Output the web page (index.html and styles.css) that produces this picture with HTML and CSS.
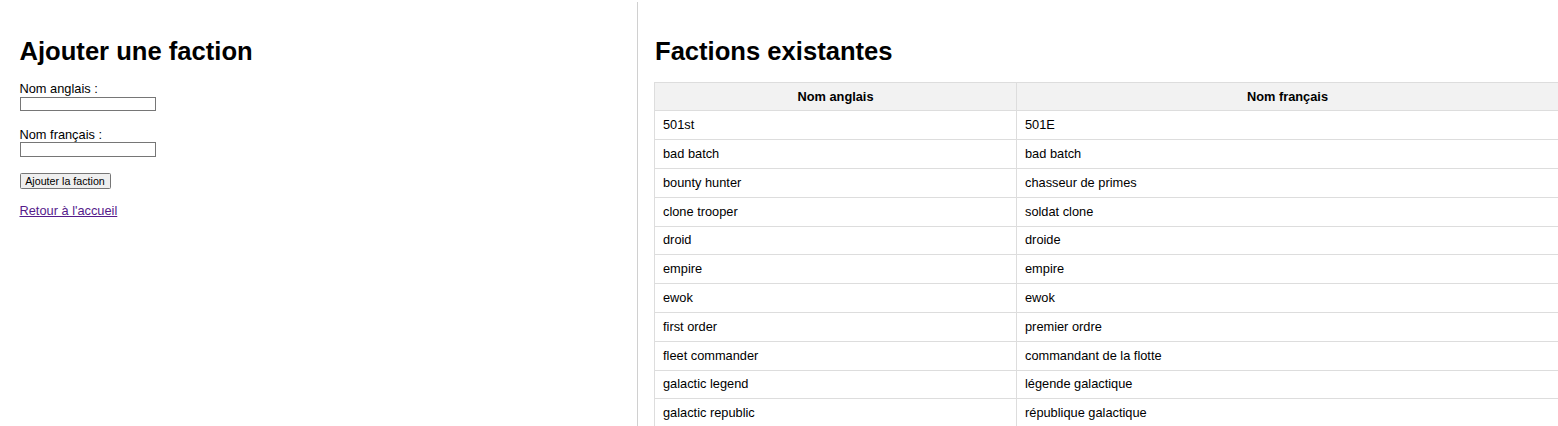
FILE: index.html
```html
<!DOCTYPE html>
<html lang="fr">
<head>
<meta charset="utf-8">
<title>Factions</title>
<link rel="stylesheet" href="styles.css">
</head>
<body>
<div class="layout">
  <section class="left">
    <h2 class="title">Ajouter une faction</h2>
    <form class="form">
      <div class="field">
        <label class="label" for="en">Nom anglais :</label>
        <input class="input" id="en" type="text">
      </div>
      <div class="field">
        <label class="label" for="fr">Nom français :</label>
        <input class="input" id="fr" type="text">
      </div>
      <button class="btn" type="button">Ajouter la faction</button>
    </form>
    <a class="back" href="#">Retour à l'accueil</a>
  </section>
  <section class="right">
    <h2 class="title">Factions existantes</h2>
    <table class="table">
      <thead>
        <tr><th class="c1">Nom anglais</th><th>Nom français</th></tr>
      </thead>
      <tbody>
        <tr><td>501st</td><td>501E</td></tr>
        <tr><td>bad batch</td><td>bad batch</td></tr>
        <tr><td>bounty hunter</td><td>chasseur de primes</td></tr>
        <tr><td>clone trooper</td><td>soldat clone</td></tr>
        <tr><td>droid</td><td>droide</td></tr>
        <tr><td>empire</td><td>empire</td></tr>
        <tr><td>ewok</td><td>ewok</td></tr>
        <tr><td>first order</td><td>premier ordre</td></tr>
        <tr><td>fleet commander</td><td>commandant de la flotte</td></tr>
        <tr><td>galactic legend</td><td>légende galactique</td></tr>
        <tr><td>galactic republic</td><td>république galactique</td></tr>
      </tbody>
    </table>
  </section>
</div>
</body>
</html>
```
FILE: styles.css
```css
html, body {
  margin: 0;
  padding: 0;
  background: #ffffff;
}
body {
  font-family: "Liberation Sans", Arial, sans-serif;
  font-size: 12.8px;
  color: #000000;
  overflow: hidden;
}
.layout {
  display: flex;
  margin-top: 2px;
  min-height: 430px;
}
.left {
  width: 638px;
  flex: none;
  box-sizing: border-box;
  border-right: 1px solid #d0d0d0;
  padding: 35px 20px 0 19.5px;
}
.right {
  flex: 1;
  min-width: 0;
  padding: 35px 0 0 16px;
}
.title {
  margin: 0 0 16.5px;
  font-size: 25.6px;
  line-height: 28.6px;
  font-weight: bold;
}
.right .title {
  padding-left: 1px;
}
.form {
  margin: 0;
}
.field {
  margin-bottom: 16.6px;
}
.label {
  display: block;
  line-height: 14.5px;
}
.input {
  display: block;
  box-sizing: border-box;
  width: 136px;
  height: 14.6px;
  margin: 0;
  padding: 0 2px;
  border: 1px solid #767676;
  background: #ffffff;
  font-family: inherit;
  font-size: 10.7px;
}
.btn {
  display: block;
  box-sizing: border-box;
  width: 91px;
  height: 15.8px;
  margin: 0;
  padding: 0;
  border: 1px solid #767676;
  border-radius: 1.5px;
  background: #efefef;
  color: #000000;
  font-family: inherit;
  font-size: 10.7px;
  line-height: 13px;
}
.back {
  display: inline-block;
  margin-top: 14.5px;
  line-height: 14.5px;
  color: #551a8b;
  text-decoration: underline;
}
.table {
  width: 905px;
  border-collapse: collapse;
  table-layout: fixed;
}
.table th,
.table td {
  border: 1px solid #dddddd;
  padding: 0 8px;
  height: 28.8px;
  box-sizing: border-box;
  line-height: 14.5px;
  vertical-align: middle;
  text-align: left;
  font-weight: normal;
}
.table th {
  background: #f2f2f2;
  font-weight: bold;
  text-align: center;
  height: 28.4px;
}
.table .c1 {
  width: 362px;
}
```
